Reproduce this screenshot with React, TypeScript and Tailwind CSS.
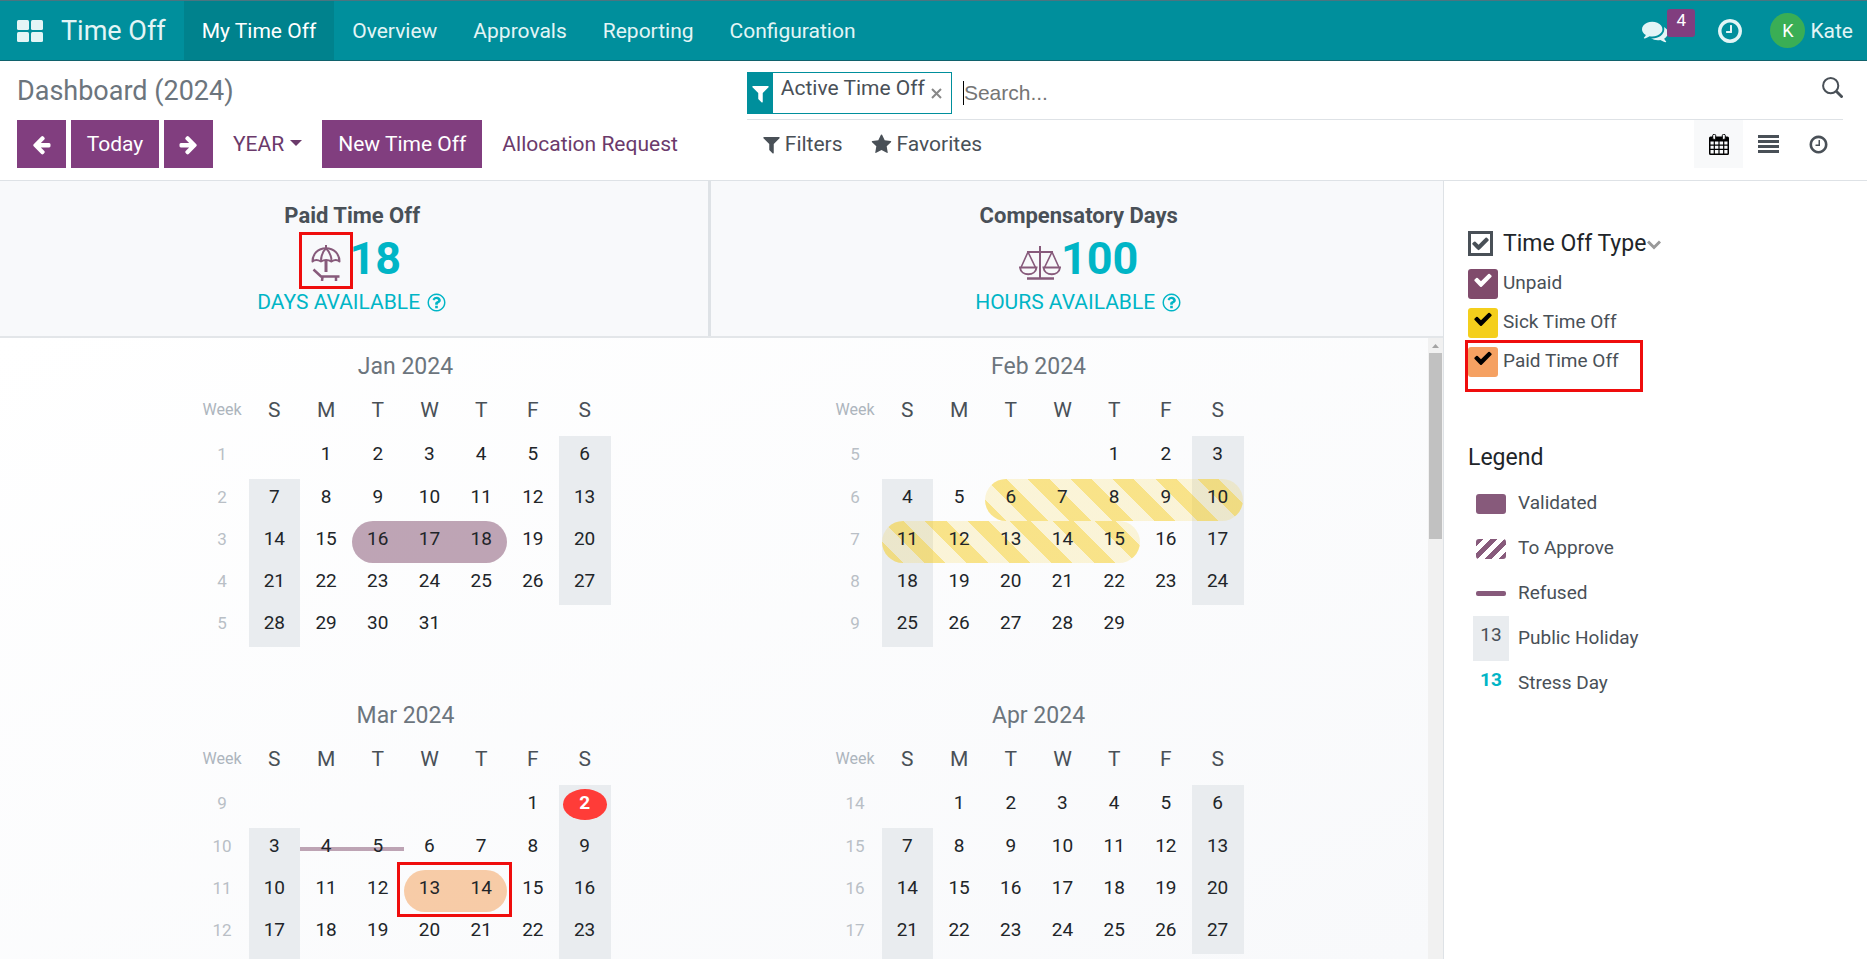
import type { ReactNode } from "react";

type Mark = {
  day: number;
  kind: "solid" | "striped" | "refused" | "orange";
  span: number;
};

type Month = {
  name: string;
  firstWeekday: number;
  days: number;
  firstWeek: number;
  marks: Mark[];
  today?: number;
};

const MONTHS: Month[] = [
  { name: "Jan 2024", firstWeekday: 1, days: 31, firstWeek: 1, marks: [{ day: 16, kind: "solid", span: 3 }] },
  {
    name: "Feb 2024",
    firstWeekday: 4,
    days: 29,
    firstWeek: 5,
    marks: [
      { day: 6, kind: "striped", span: 5 },
      { day: 11, kind: "striped", span: 5 },
    ],
  },
  {
    name: "Mar 2024",
    firstWeekday: 5,
    days: 31,
    firstWeek: 9,
    marks: [
      { day: 4, kind: "refused", span: 2 },
      { day: 13, kind: "orange", span: 2 },
    ],
    today: 2,
  },
  { name: "Apr 2024", firstWeekday: 1, days: 30, firstWeek: 14, marks: [] },
];

const WEEKDAYS = ["S", "M", "T", "W", "T", "F", "S"];

const PATHS = {
  left: "M1664 896v128q0 53-32.5 90.5t-84.5 37.5h-704l293 294q38 36 38 90t-38 90l-75 76q-37 37-90 37-52 0-91-37l-651-652q-37-37-37-90 0-52 37-91l651-650q38-38 91-38 52 0 90 38l75 74q38 38 38 91t-38 91l-293 293h704q52 0 84.5 37.5t32.5 90.5z",
  right:
    "M1600 960q0 54-37 91l-651 651q-39 37-91 37-51 0-90-37l-75-75q-38-38-38-91t38-91l293-293h-704q-52 0-84.5-37.5t-32.5-90.5v-128q0-53 32.5-90.5t84.5-37.5h704l-293-294q-38-36-38-90t38-90l75-75q38-38 90-38 53 0 91 38l651 651q37 35 37 90z",
  filter:
    "M1595 295q17 41-14 70l-493 493v742q0 42-39 59-13 5-25 5-27 0-45-19l-256-256q-19-19-19-45v-486l-493-493q-31-29-14-70 17-39 59-39h1280q42 0 59 39z",
  star: "M1728 647q0 22-26 48l-363 354 86 500q1 7 1 20 0 21-10.5 35.5t-30.5 14.5q-19 0-40-12l-449-236-449 236q-22 12-40 12-21 0-31.5-14.5t-10.5-35.5q0-6 2-20l86-500-364-354q-25-27-25-48 0-37 56-46l502-73 225-455q19-41 49-41t49 41l225 455 502 73q56 9 56 46z",
  clock:
    "M1024 544v448q0 14-9 23t-23 9h-320q-14 0-23-9t-9-23v-64q0-14 9-23t23-9h224v-352q0-14 9-23t23-9h64q14 0 23 9t9 23zm416 352q0-148-73-273t-198-198-273-73-273 73-198 198-73 273 73 273 198 198 273 73 273-73 198-198 73-273zm224 0q0 209-103 385.5t-279.5 279.5-385.5 103-385.5-103-279.5-279.5-103-385.5 103-385.5 279.5-279.5 385.5-103 385.5 103 279.5 279.5 103 385.5z",
  check:
    "M1671 566q0 40-28 68l-724 724-136 136q-28 28-68 28t-68-28l-136-136-362-362q-28-28-28-68t28-68l136-136q28-28 68-28t68 28l294 295 656-657q28-28 68-28t68 28l136 136q28 28 28 68z",
  question:
    "M1008 1200v160q0 14-9 23t-23 9h-160q-14 0-23-9t-9-23v-160q0-14 9-23t23-9h160q14 0 23 9t9 23zm256-496q0 50-15 90t-45.5 69-52 44-59.5 36q-32 18-46.5 28t-26 24-11.5 29v32q0 14-9 23t-23 9h-160q-14 0-23-9t-9-23v-68q0-35 10.5-64.5t24-47.5 39-35.5 41-25.5 44.5-21q53-25 75-43t22-49q0-42-43.5-71.5t-95.5-29.5q-56 0-95 27-29 20-80 83-9 12-25 12-11 0-19-6l-108-82q-10-7-12-20t5-23q122-192 349-192 129 0 238.5 89.5t109.5 214.5zm-368-448q-130 0-248.5 51t-204 136.5-136.5 204-51 248.5 51 248.5 136.5 204 204 136.5 248.5 51 248.5-51 204-136.5 136.5-204 51-248.5-51-248.5-136.5-204-204-136.5-248.5-51zm768 640q0 209-103 385.5t-279.5 279.5-385.5 103-385.5-103-279.5-279.5-103-385.5 103-385.5 279.5-279.5 385.5-103 385.5 103 279.5 279.5 103 385.5z",
  comments:
    "M1408 768q0 139-94 257t-256.5 186.5-353.5 68.5q-86 0-176-16-124 88-278 128-36 9-86 16h-3q-11 0-20.5-8t-11.5-21q-1-3-1-6.5t.5-6.5 2-6l2.5-5 3.5-5.5 4-5 4.5-5 4-4.5q5-6 23-25t26-29.5 22.5-29 25-38.5 20.5-44q-124-72-195-177t-71-224q0-139 94-257t256.5-186.5 353.5-68.5 353.5 68.5 256.5 186.5 94 257zm384 256q0 120-71 224.5t-195 176.5q10 24 20.5 44t25 38.5 22.5 29 26 29.5 23 25q1 1 4 4.5t4.5 5 4 5 3.5 5.5l2.5 5 2 6 .5 6.5-1 6.5q-3 14-13 22t-22 7q-50-7-86-16-154-40-278-128-90 16-176 16-271 0-472-132 58 4 88 4 161 0 309-45t264-129q125-92 192-212t67-254q0-77-23-152 129 71 204 178t75 230z",
};

function Icon({ name, className }: { name: keyof typeof PATHS; className: string }) {
  return (
    <svg viewBox="0 0 1792 1792" fill="currentColor" aria-hidden="true" className={`shrink-0 ${className}`}>
      <path d={PATHS[name]} />
    </svg>
  );
}

function UmbrellaIcon() {
  return (
    <svg viewBox="0 0 30 36" aria-hidden="true" className="h-9 w-[30px] fill-none stroke-[#875a7b] stroke-2">
      <path d="M1.500 16.500C1.500 9 7 3.200 15 3.200S28.500 9 28.500 16.500Q25 13.500 20.500 16.500 15 13.500 10 16.500 5 13.500 1.500 16.500Z" strokeLinejoin="round" />
      <path d="M10 16.500C10 10 12 6 15 3.200 18 6 20.500 10 20.500 16.500" />
      <path d="M15 0v3.500" />
      <path d="M15 15.500V27" strokeWidth="3" />
      <path d="M2.500 24.500L10 31.500H28.500M11.500 32l-.5 4M25 32v4" strokeWidth="2.500" />
    </svg>
  );
}

function ScalesIcon() {
  return (
    <svg viewBox="0 0 42 34" aria-hidden="true" className="h-[34px] w-[42px] fill-none stroke-[#875a7b] stroke-2">
      <path d="M21 0v33M8 6h26" />
      <path d="M8 32.500h27" strokeWidth="2.500" />
      <path d="M9 6L2 21.500M9 6l7.500 15.500M33 6l-7.500 15.500M33 6l7 15.500" strokeWidth="1.600" />
      <path d="M1 21.500h16.500c-1 9-15.500 9-16.500 0ZM24.500 21.500H41c-1 9-15.500 9-16.500 0Z" />
    </svg>
  );
}

function CalendarIcon() {
  return (
    <svg viewBox="0 0 20 21" aria-hidden="true" className="h-[21px] w-5">
      <path fill="currentColor" fillRule="evenodd" d="M1.500 2.500h17q1.500 0 1.500 1.500v15.500q0 1.500-1.500 1.500h-17q-1.500 0-1.500-1.500V4q0-1.500 1.500-1.500ZM1.500 7.500v3h3.200v-3ZM5.900 7.500v3h3.500v-3ZM10.600 7.500v3h3.500v-3ZM15.300 7.500v3h3.200v-3ZM1.500 11.700v3h3.200v-3ZM5.900 11.700v3h3.500v-3ZM10.600 11.700v3h3.500v-3ZM15.300 11.700v3h3.200v-3ZM1.500 15.900v3.600h3.200v-3.600ZM5.900 15.900v3.600h3.500v-3.600ZM10.600 15.900v3.600h3.500v-3.600ZM15.300 15.900v3.600h3.200v-3.600Z" />
      <rect x="3.700" y=".4" width="3" height="5" rx="1.200" fill="#f8f9fa" stroke="currentColor" strokeWidth="1" />
      <rect x="13.300" y=".4" width="3" height="5" rx="1.200" fill="#f8f9fa" stroke="currentColor" strokeWidth="1" />
    </svg>
  );
}

function MarkShape({ mark }: { mark: Mark }) {
  const width = { width: `${mark.span * 100}%` };
  if (mark.kind === "refused") {
    return <span className="pointer-events-none absolute top-[19px] left-0 z-10 h-1 bg-[#804b6c]/50" style={width} />;
  }
  if (mark.kind === "striped") {
    return (
      <span
        className="pointer-events-none absolute inset-y-0 left-0 z-10 rounded-full bg-[repeating-linear-gradient(45deg,rgba(246,204,30,0.52)_0px_15px,rgba(246,204,30,0.17)_15px_30px)]"
        style={width}
      />
    );
  }
  if (mark.kind === "orange") {
    return (
      <>
        <span className="pointer-events-none absolute inset-y-0 left-0 z-10 rounded-full bg-[#f4a460]/55" style={width} />
        <span className="pointer-events-none absolute -top-2 -bottom-[5px] -left-[7px] z-30 box-content border-3 border-[#ef0d0d] pr-[6px]" style={width} />
      </>
    );
  }
  return <span className="pointer-events-none absolute inset-y-0 left-0 z-10 rounded-full bg-[#804b6c]/50" style={width} />;
}

function MonthTable({ month }: { month: Month }) {
  const rows = Math.ceil((month.firstWeekday + month.days) / 7);
  return (
    <section className="flex h-[349px] flex-col items-center pt-[11px]">
      <h3 className="text-[23px] leading-9 text-[#6c757d]">{month.name}</h3>
      <table className="mt-1 w-[410px] table-fixed border-collapse text-center text-[#212529]">
        <thead>
          <tr className="h-[47px]">
            <th scope="col" className="w-12 pr-[5px] align-top text-[16px] leading-[42px] font-normal text-[#adb5bd]">
              Week
            </th>
            {WEEKDAYS.map((d, i) => (
              <th key={i} scope="col" className="align-top text-[21px] leading-[42px] font-normal text-[#495057]">
                {d}
              </th>
            ))}
          </tr>
        </thead>
        <tbody className="text-[19px] leading-9">
          {Array.from({ length: rows }, (_, r) => (
            <tr key={r} className="h-[42px] first:h-[43px]">
              <th scope="row" className="pr-[5px] align-top text-[17px] font-normal text-[#b9bfc6]">
                {month.firstWeek + r}
              </th>
              {WEEKDAYS.map((_, c) => {
                const day = r * 7 + c - month.firstWeekday + 1;
                if (day < 1 || day > month.days) return <td key={c} />;
                const mark = month.marks.find((m) => m.day === day);
                const weekend = c === 0 || c === 6;
                return (
                  <td key={c} className={`relative p-0 align-top ${weekend ? "bg-[#e9ecef]" : ""}`}>
                    {month.today === day ? (
                      <span className="mx-auto mt-1 block h-[31px] w-11 rounded-[50%] bg-[#ff3c38] leading-7 font-bold text-white">
                        {day}
                      </span>
                    ) : (
                      <span className="relative z-20">{day}</span>
                    )}
                    {mark && <MarkShape mark={mark} />}
                  </td>
                );
              })}
            </tr>
          ))}
        </tbody>
      </table>
    </section>
  );
}

function Allocation({ title, icon, amount, unit, className }: { title: string; icon: ReactNode; amount: string; unit: string; className: string }) {
  return (
    <div className={`flex flex-col items-center pt-5 text-[#00b5c6] ${className}`}>
      <h2 className="text-[22px] leading-[30px] font-bold text-[#495057]">{title}</h2>
      <div className="flex h-14 items-center">
        {icon}
        <span className="text-[45px] leading-14 font-bold">{amount}</span>
      </div>
      <div className="flex items-center gap-[6px] text-[21px] leading-[30px]">
        {unit}
        <Icon name="question" className="h-[21px] w-[21px]" />
      </div>
    </div>
  );
}

const TYPES = [
  { id: "unpaid", label: "Unpaid", box: "bg-[#804b6c]", tick: "text-white" },
  { id: "sick", label: "Sick Time Off", box: "bg-[#f4cf1c]", tick: "text-black" },
  { id: "paid", label: "Paid Time Off", box: "bg-[#f5a162]", tick: "text-black" },
];

function Sidebar() {
  return (
    <aside className="w-[424px] shrink-0 border-l border-[#dee2e6] pt-11 pl-6 text-[19px] text-[#495057]">
      <div className="flex h-9 items-center">
        <label className="flex items-center text-[23px] leading-9 text-[#212529]">
          <span className="relative mr-[10px] flex h-[25px] w-[25px] items-center justify-center text-[#495057]">
            <input type="checkbox" defaultChecked className="absolute inset-0 appearance-none border-3 border-[#495057]" />
            <Icon name="check" className="relative h-[19px] w-[19px]" />
          </span>
          <span className="pt-[2px]">Time Off Type</span>
        </label>
        <svg viewBox="0 0 14 10" aria-hidden="true" className="mt-1 ml-px h-[10px] w-[14px] fill-none stroke-[#999] stroke-3">
          <path d="M1 1.500l6 6 6-6" />
        </svg>
      </div>
      <ul className="mt-px">
        {TYPES.map((t) => (
          <li key={t.id} className="relative h-[39px]">
            <label className="flex items-center pt-[7px]">
              <span className={`relative mr-[5px] flex h-[30px] w-[30px] justify-center pt-px ${t.tick}`}>
                <input type="checkbox" defaultChecked className={`absolute inset-0 appearance-none rounded-[3px] ${t.box}`} />
                <Icon name="check" className="relative h-[20px] w-[20px]" />
              </span>
              <span className="pb-[2px]">{t.label}</span>
            </label>
            {t.id === "paid" && <span className="absolute top-0 -left-[3px] h-[52px] w-[178px] border-3 border-[#ef0d0d]" />}
          </li>
        ))}
      </ul>
      <h2 className="mt-[61px] text-[23px] leading-9 text-[#212529]">Legend</h2>
      <ul className="mt-[5px] [&>li]:flex [&>li]:h-[45px] [&>li]:items-center [&>li]:gap-[9px] [&>li]:pl-[5px]">
        <li>
          <span className="mx-[3px] h-5 w-[30px] rounded-[3px] bg-[#875a7b]" />
          Validated
        </li>
        <li>
          <span className="mx-[3px] h-5 w-[30px] rounded-[3px] bg-[repeating-linear-gradient(135deg,#875a7b_0px_5px,#ffffff_5px_10px)]" />
          To Approve
        </li>
        <li>
          <span className="mx-[3px] h-[5px] w-[30px] rounded-[2px] bg-[#875a7b]" />
          Refused
        </li>
        <li>
          <span className="h-[45px] w-9 bg-[#e9ecef] text-center leading-[38px]">13</span>
          Public Holiday
        </li>
        <li>
          <span className="h-[45px] w-9 text-center leading-[38px] font-bold text-[#00b5c6]">13</span>
          Stress Day
        </li>
      </ul>
    </aside>
  );
}

export default function App() {
  return (
    <div className="flex h-screen flex-col overflow-hidden bg-white font-['Roboto',sans-serif] text-[21px] text-[#495057]">
      <header className="flex h-[61px] shrink-0 items-stretch border-t border-b border-t-[#4b7480] border-b-[#10626c] bg-[#008f9c] text-[#e3f5f6]">
        <button type="button" aria-label="Apps" className="flex items-center pl-[17px]">
          <svg viewBox="0 0 26 22" aria-hidden="true" className="h-[22px] w-[26px] fill-current">
            <rect width="12" height="10" rx="1.500" />
            <rect x="14" width="12" height="10" rx="1.500" />
            <rect y="12" width="12" height="10" rx="1.500" />
            <rect x="14" y="12" width="12" height="10" rx="1.500" />
          </svg>
        </button>
        <a href="#" className="flex items-center pt-px pr-[18px] pl-[18px] text-[27px]">
          Time Off
        </a>
        <nav className="flex">
          <a href="#" className="flex items-center bg-[#00828d] px-[18px] pt-[2px] text-white">My Time Off</a>
          {["Overview", "Approvals", "Reporting", "Configuration"].map((item) => (
            <a key={item} href="#" className="flex items-center px-[18px] pt-[2px]">
              {item}
            </a>
          ))}
        </nav>
        <div className="ml-auto flex items-center pr-[14px]">
          <button type="button" aria-label="Messages" className="relative mr-[48px]">
            <Icon name="comments" className="h-[26px] w-[26px]" />
            <span className="absolute -top-[9px] left-[25px] flex h-7 w-7 justify-center rounded-[3px] bg-[#813e7f] text-[17px] leading-[22px] text-white">4</span>
          </button>
          <button type="button" aria-label="Activities" className="mr-[26px]">
            <Icon name="clock" className="h-7 w-7" />
          </button>
          <button type="button" className="flex items-center gap-[5px]">
            <span className="flex h-[35px] w-[35px] items-center justify-center rounded-full bg-[#3aae55] text-[18px] text-white">K</span>
            <span className="pt-[2px]">Kate</span>
          </button>
        </div>
      </header>

      <div className="flex h-[120px] shrink-0 border-b border-[#dee2e6]">
        <div className="flex w-[40%] flex-col pl-[17px]">
          <h1 className="pt-3 text-[27px] leading-9 text-[#6c757d]">Dashboard (2024)</h1>
          <div className="mt-[11px] flex h-12 items-stretch whitespace-nowrap text-[#6b3a6b]">
            <button type="button" aria-label="Previous" className="mr-[5px] flex w-[49px] items-center justify-center bg-[#813e7f] text-white">
              <Icon name="left" className="h-[21px] w-[21px]" />
            </button>
            <button type="button" className="mr-[5px] w-[88px] bg-[#813e7f] pt-[2px] text-white">Today</button>
            <button type="button" aria-label="Next" className="mr-[20px] flex w-[49px] items-center justify-center bg-[#813e7f] text-white">
              <Icon name="right" className="h-[21px] w-[21px]" />
            </button>
            <button type="button" className="mr-5 flex items-center gap-[6px] pt-[2px]">
              YEAR
              <svg viewBox="0 0 12 6" aria-hidden="true" className="mb-1 h-[6px] w-3 fill-current">
                <path d="M0 0h12L6 6Z" />
              </svg>
            </button>
            <button type="button" className="mr-5 bg-[#813e7f] px-4 pt-[2px] text-white">New Time Off</button>
            <button type="button" className="pt-[2px]">Allocation Request</button>
          </div>
        </div>

        <div className="mr-6 flex flex-1 flex-col">
          <div className="flex h-[59px] items-start border-b border-[#dee2e6] pt-[11px]">
            <div className="mr-[11px] flex h-[42px] border border-[#008f9c] bg-white">
              <span className="flex w-[25px] items-center justify-center bg-[#008f9c] text-white">
                <Icon name="filter" className="h-[21px] w-[21px]" />
              </span>
              <span className="pl-2 leading-[31px]">Active Time Off</span>
              <button type="button" aria-label="Remove filter" className="mr-[9px] ml-[6px] self-center">
                <svg viewBox="0 0 11 11" aria-hidden="true" className="h-[11px] w-[11px] fill-none stroke-[#888] stroke-2">
                  <path d="M1 1l9 9M10 1l-9 9" />
                </svg>
              </button>
            </div>
            <span aria-hidden="true" className="mt-[9px] h-6 w-px bg-black" />
            <input
              type="text"
              aria-label="Search"
              placeholder="Search..."
              className="h-[42px] flex-1 font-['Liberation_Sans',sans-serif] text-[21px] outline-none placeholder:text-[#757575]"
            />
            <button type="button" aria-label="Run search" className="mt-[5px]">
              <svg viewBox="0 0 21 21" aria-hidden="true" className="h-[21px] w-[21px] fill-none stroke-[#495057] stroke-2">
                <circle cx="8.700" cy="8.700" r="7.600" />
                <path d="M14 14l6.500 6.500" strokeWidth="2.800" />
              </svg>
            </button>
          </div>
          <div className="flex h-12 items-stretch pl-[14px]">
            <button type="button" className="flex items-center gap-[3px]">
              <Icon name="filter" className="h-[21px] w-[21px]" />
              <span className="pt-[2px]">Filters</span>
            </button>
            <button type="button" className="ml-[28px] flex items-center gap-[5px]">
              <Icon name="star" className="h-[21px] w-[21px]" />
              <span className="pt-[2px]">Favorites</span>
            </button>
            <div className="ml-auto flex">
              <button type="button" aria-label="Calendar view" className="flex w-[49px] items-center justify-center bg-[#f8f9fa] text-black">
                <CalendarIcon />
              </button>
              <button type="button" aria-label="List view" className="flex w-[51px] items-center justify-center">
                <svg viewBox="0 0 21 18" aria-hidden="true" className="h-[18px] w-[21px] fill-current">
                  <path d="M0 0h21v3H0zM0 5h21v3H0zM0 10h21v3H0zM0 15h21v3H0z" />
                </svg>
              </button>
              <button type="button" aria-label="Activity view" className="flex w-[49px] items-center justify-center">
                <Icon name="clock" className="h-[21px] w-[21px]" />
              </button>
            </div>
          </div>
        </div>
      </div>

      <div className="flex min-h-0 flex-1">
        <main className="flex min-w-0 flex-1 flex-col">
          <div className="flex h-[157px] shrink-0 border-b-2 border-[#e3e6e9] bg-[#f8f9fb]">
            <Allocation
              title="Paid Time Off"
              amount="18"
              unit="DAYS AVAILABLE"
              className="w-[49.3%] border-r-3 border-[#dee2e6] pr-1"
              icon={
                <span className="relative mr-2 ml-2 pt-2">
                  <UmbrellaIcon />
                  <span className="absolute -top-[5px] -left-3 h-[57px] w-[54px] border-3 border-[#ef0d0d]" />
                </span>
              }
            />
            <Allocation
              title="Compensatory Days"
              amount="100"
              unit="HOURS AVAILABLE"
              className="flex-1 pl-[3px]"
              icon={
                <span className="pt-2">
                  <ScalesIcon />
                </span>
              }
            />
          </div>
          <div className="flex min-h-0 flex-1">
            <div className="grid min-w-0 flex-1 auto-rows-min grid-cols-2 overflow-y-auto bg-linear-to-br from-white to-[#f8f9fb] pr-[73px] pl-[89px] [scrollbar-width:none]">
              {MONTHS.map((m) => (
                <MonthTable key={m.name} month={m} />
              ))}
            </div>
            <div aria-hidden="true" className="flex w-[15px] flex-col items-center bg-[#f1f1f1]">
              <svg viewBox="0 0 15 15" className="h-[15px] w-[15px] fill-[#a3a3a3]">
                <path d="M4 10h7L7.500 6Z" />
              </svg>
              <span className="h-[186px] w-[13px] bg-[#c1c1c1]" />
            </div>
          </div>
        </main>
        <Sidebar />
      </div>
    </div>
  );
}
